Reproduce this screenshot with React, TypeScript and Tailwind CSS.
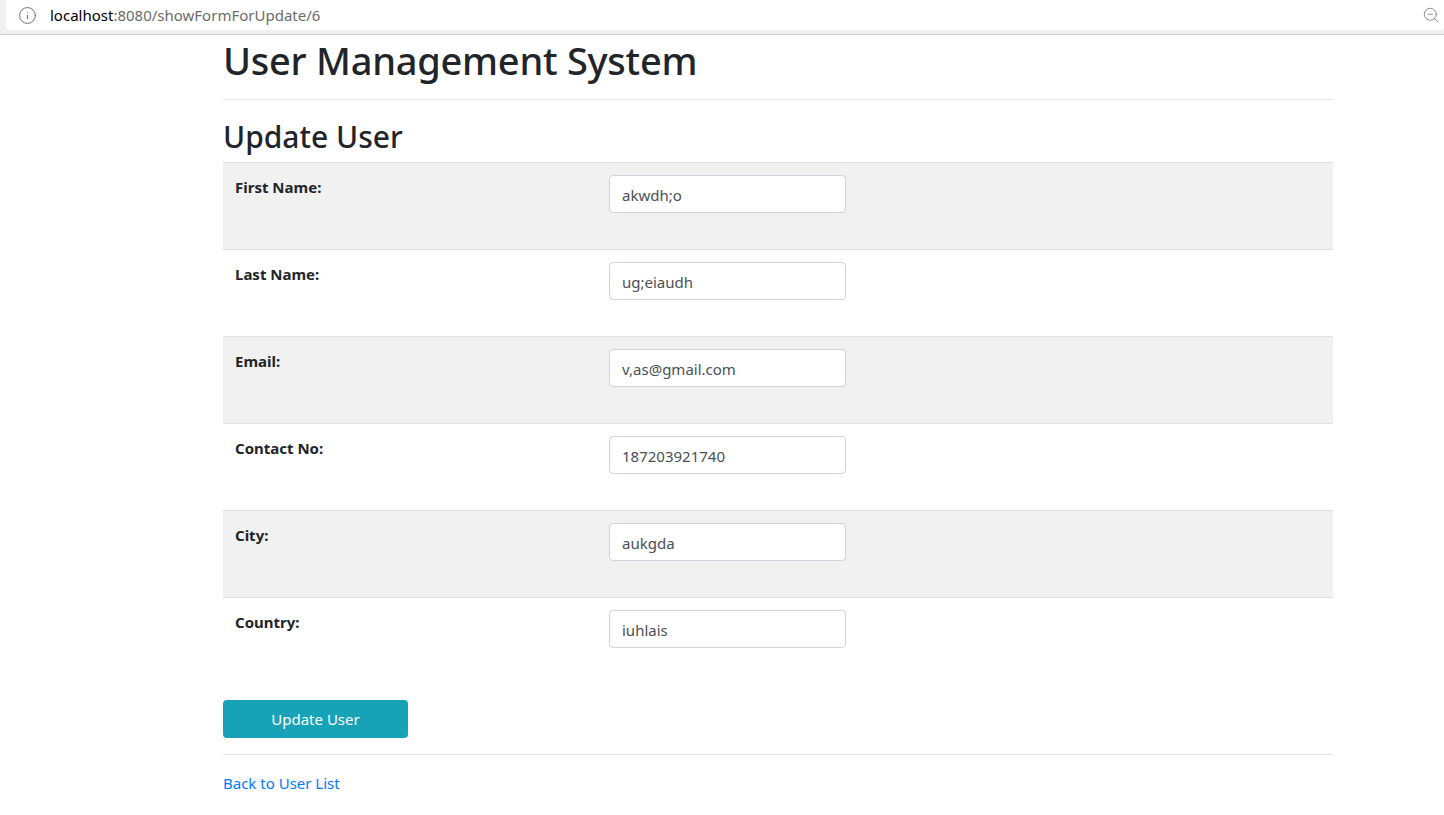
import { Info, ZoomOut } from 'lucide-react'

const rows = [
  { label: 'First Name:', value: 'akwdh;o' },
  { label: 'Last Name:', value: 'ug;eiaudh' },
  { label: 'Email:', value: 'v,as@gmail.com' },
  { label: 'Contact No:', value: '187203921740' },
  { label: 'City:', value: 'aukgda' },
  { label: 'Country:', value: 'iuhlais' },
]

export default function App() {
  return (
    <div className="min-h-[815px] bg-white font-['Noto_Sans','Open_Sans',sans-serif] text-[#212529]">
      {/* browser bar */}
      <div className="h-[35px] bg-[#f1f1f1] border-b border-[#cfcfcf]">
        <div className="h-[30px] ml-[6px] bg-white rounded-b-[4px] flex items-center pl-[12px] pr-[4px]">
          <Info size={19} strokeWidth={1.25} className="text-[#6e6e6e]" />
          <div className="ml-[13px] text-[15px] text-[#6b6b6b]">
            <span className="text-black">localhost</span>:8080/showFormForUpdate/6
          </div>
          <ZoomOut size={18} strokeWidth={1.1} className="ml-auto text-[#777777]" />
        </div>
      </div>

      <div className="w-[1110px] ml-[223px]">
        <h1 className="text-[38px] tracking-[-0.25px] leading-[48px] font-medium mt-[1px]">User Management System</h1>
        <hr className="mt-[15px] border-[#e3e3e3]" />
        <h2 className="text-[30px] leading-[38px] font-medium mt-[18px] mb-[6px]">Update User</h2>

        <div>
          {rows.map((row, i) => (
            <div
              key={row.label}
              className={`grid grid-cols-[374px_1fr] h-[87px] p-[12px] pl-0 border-t border-[#dee2e6] ${i % 2 === 0 ? 'bg-[#f1f1f2]' : 'bg-white'}`}
            >
              <label className="pl-[12px] text-[15px] leading-[24px] font-bold">{row.label}</label>
              <input
                readOnly
                value={row.value}
                className="ml-[12px] w-[237px] h-[38px] px-[12px] pt-[2px] bg-white border border-[#ced4da] rounded-[4px] text-[15px] text-[#495057] outline-none"
              />
            </div>
          ))}
        </div>

        <button className="block mt-[16px] w-[185px] h-[38px] bg-[#17a2b8] rounded-[4px] text-white text-[15px]">
          Update User
        </button>
        <hr className="mt-[16px] border-[#e3e3e3]" />
        <a href="#" className="block mt-[16px] text-[15px] leading-[24px] text-[#007bff]">
          Back to User List
        </a>
      </div>
    </div>
  )
}
